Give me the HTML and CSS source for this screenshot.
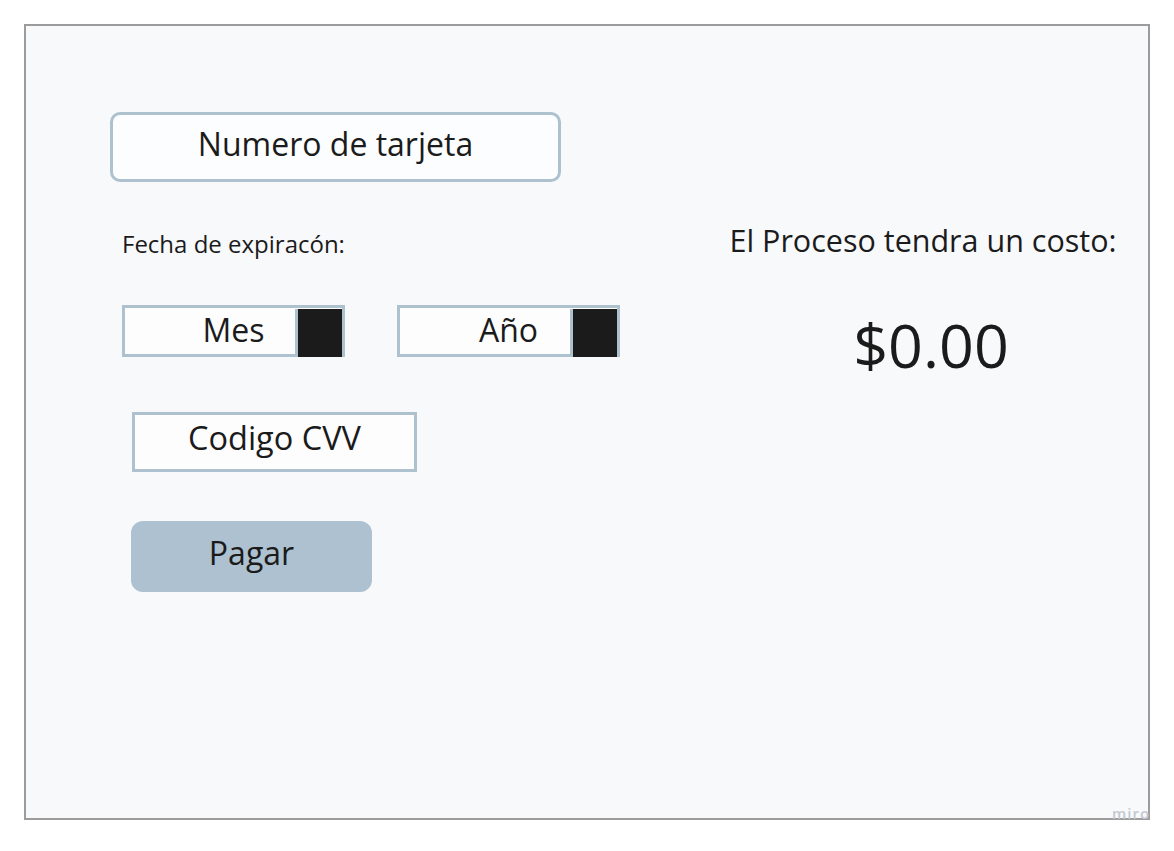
FILE: index.html
```html
<!DOCTYPE html>
<html lang="es">
<head>
<meta charset="utf-8">
<title>Pago</title>
<link rel="stylesheet" href="styles.css">
</head>
<body>
<div class="frame">
  <div class="left">
    <div class="card-input">Numero de tarjeta</div>
    <div class="label">Fecha de expiracón:</div>
    <div class="date-row">
      <div class="select"><span class="select-text">Mes</span><span class="select-btn"></span></div>
      <div class="select"><span class="select-text">Año</span><span class="select-btn"></span></div>
    </div>
    <div class="cvv">Codigo CVV</div>
    <div class="pay">Pagar</div>
  </div>
  <div class="right">
    <div class="cost-label">El Proceso tendra un costo:</div>
    <div class="price">$0.00</div>
  </div>
</div>
<div class="watermark">miro</div>
</body>
</html>
```
FILE: styles.css
```css
* { box-sizing: border-box; }
html, body { margin: 0; padding: 0; }
body {
  background: #ffffff;
  padding: 24px;
  font-family: "Open Sans", "Noto Sans", "Liberation Sans", sans-serif;
  color: #1b1b1b;
  position: relative;
  width: 1174px;
  height: 851px;
}
.frame {
  width: 1126px;
  height: 796px;
  border: 2px solid #9c9c9c;
  background: #f8f9fb;
  display: flex;
}
.left {
  width: 672px;
  display: flex;
  flex-direction: column;
  align-items: flex-start;
}
.card-input {
  margin-top: 86px;
  margin-left: 84px;
  width: 451px;
  height: 70px;
  padding-bottom: 8px;
  border: 3px solid #adc1cf;
  border-radius: 10px;
  background: #fcfdfe;
  display: flex;
  align-items: center;
  justify-content: center;
  font-size: 32px;
}
.label {
  margin-top: 47px;
  margin-left: 96px;
  font-size: 24px;
  line-height: 30px;
}
.date-row {
  margin-top: 46px;
  margin-left: 96px;
  display: flex;
  gap: 52px;
}
.select {
  width: 223px;
  height: 52px;
  border: 3px solid #adc1cf;
  background: #fdfdfe;
  display: grid;
  grid-template-columns: 1fr 47px;
}
.select-text {
  grid-row: 1;
  grid-column: 1 / -1;
  display: flex;
  align-items: center;
  justify-content: center;
  padding-bottom: 7px;
  font-size: 32px;
}
.select-btn {
  grid-row: 1;
  grid-column: 2;
  border-left: 3px solid #adc1cf;
  background: #1b1b1b;
  margin: 1px 0;
}
.cvv {
  margin-top: 55px;
  margin-left: 106px;
  width: 285px;
  height: 60px;
  padding-bottom: 9px;
  border: 3px solid #adc1cf;
  background: #fdfdfe;
  display: flex;
  align-items: center;
  justify-content: center;
  font-size: 32.5px;
}
.pay {
  margin-top: 49px;
  margin-left: 105px;
  width: 241px;
  height: 71px;
  padding-bottom: 8px;
  border-radius: 12px;
  background: #adc1d0;
  display: flex;
  align-items: center;
  justify-content: center;
  font-size: 32px;
}
.right {
  flex: 1;
  display: flex;
  flex-direction: column;
  align-items: center;
}
.cost-label {
  margin-top: 194px;
  font-size: 30.5px;
  line-height: 40px;
  white-space: nowrap;
}
.price {
  margin-top: 45px;
  margin-left: 16px;
  font-size: 61px;
  line-height: 80px;
}
.watermark {
  position: absolute;
  left: 1112px;
  top: 803px;
  font-size: 15px;
  font-weight: 600;
  letter-spacing: 1px;
  color: #c4c8d0;
}
```
